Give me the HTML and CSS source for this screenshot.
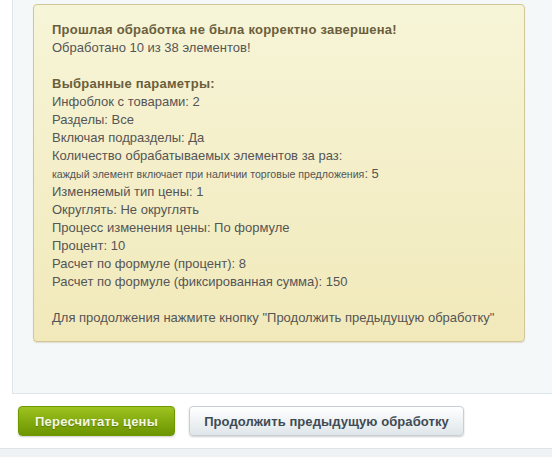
FILE: index.html
```html
<!DOCTYPE html>
<html lang="ru">
<head>
  <meta charset="UTF-8" />
  <meta name="viewport" content="width=device-width, initial-scale=1.0"/>
  <title>Пересчет цен</title>
  <link rel="stylesheet" href="styles.css">
</head>
<body>
  <div class="detail-content">
    <div class="info-message">
      <div class="info-title">Прошлая обработка не была корректно завершена!</div>
      <div>Обработано 10 из 38 элементов!</div>
      <br>
      <div class="info-title">Выбранные параметры:</div>
      <div>Инфоблок с товарами: 2</div>
      <div>Разделы: Все</div>
      <div>Включая подразделы: Да</div>
      <div>Количество обрабатываемых элементов за раз:</div>
      <div><small>каждый элемент включает при наличии торговые предложения</small>: 5</div>
      <div>Изменяемый тип цены: 1</div>
      <div>Округлять: Не округлять</div>
      <div>Процесс изменения цены: По формуле</div>
      <div>Процент: 10</div>
      <div>Расчет по формуле (процент): 8</div>
      <div>Расчет по формуле (фиксированная сумма): 150</div>
      <br>
      <div>Для продолжения нажмите кнопку "Продолжить предыдущую обработку"</div>
    </div>
  </div>
  <div class="buttons">
    <button class="btn btn-save">Пересчитать цены</button>
    <button class="btn btn-continue">Продолжить предыдущую обработку</button>
  </div>
  <div class="footer-strip"></div>
</body>
</html>
```

FILE: styles.css
```css
body {
  margin: 0;
  padding: 0;
  font-family: "Liberation Sans", Arial, sans-serif;
  font-size: 13px;
  background: #fff;
}

.detail-content {
  margin-left: 12px;
  padding: 4px 27px 51px 20px;
  background: #f5f8f9;
  border-left: 1px solid #dce5ea;
  border-bottom: 1px solid #dce5ea;
}

.info-message {
  background: linear-gradient(#f7f5d8, #f1e9ba);
  border: 1px solid #d2c796;
  border-radius: 4px;
  padding: 16px 18px 14px;
  color: #555;
  line-height: 18px;
  box-shadow: 0 1px 1px rgba(160, 140, 80, 0.25);
}

.info-message br {
  display: block;
  content: "";
  height: 18px;
}

.info-title {
  font-weight: bold;
  color: #6b5e3c;
  letter-spacing: 0.24px;
}

.info-message small {
  font-size: 10.6px;
}

.buttons {
  display: flex;
  gap: 14px;
  padding: 12px 0 12px 18px;
}

.btn {
  height: 30px;
  padding: 0;
  font-family: "Liberation Sans", Arial, sans-serif;
  font-size: 13px;
  font-weight: bold;
  letter-spacing: 0.2px;
  white-space: nowrap;
  color: #3f4b54;
  background: linear-gradient(#ffffff, #dfe6e9);
  border: 1px solid #c6cfd3;
  border-radius: 4px;
  box-shadow: 0 1px 2px rgba(0, 0, 0, 0.2);
  cursor: pointer;
}

.btn-save {
  width: 157px;
  color: #f4f8e4;
  background: linear-gradient(#9cc31f, #6c9500);
  border-color: #6f9800;
  text-shadow: 0 1px 1px rgba(60, 80, 0, 0.5);
}

.btn-continue {
  width: 275px;
  letter-spacing: 0.08px;
}

.footer-strip {
  height: 20px;
  background: #eef2f4;
  border-top: 1px solid #dde4e8;
}
```
